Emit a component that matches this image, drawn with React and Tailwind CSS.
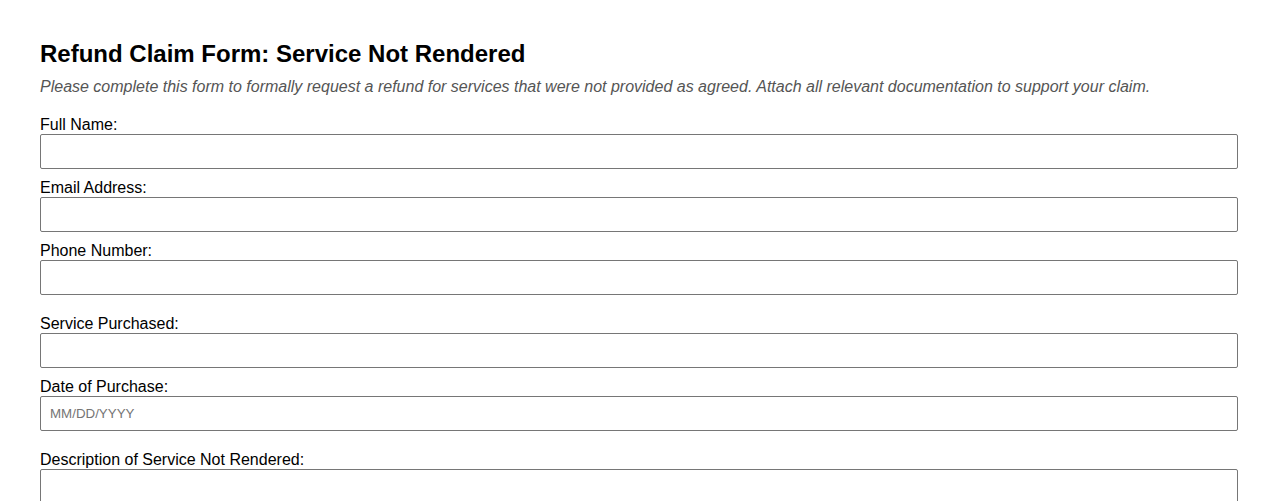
export default function App() {
  const Field = ({ label, placeholder, last }) => (
    <div className={last ? "mb-[20px]" : "mb-[10px]"}>
      <label className="block text-[16px] leading-[18px] text-black">{label}</label>
      <input
        type="text"
        placeholder={placeholder}
        className="block w-full h-[35px] border border-[#767676] rounded-[2px] px-[9px] text-[13.33px] text-black placeholder:text-[#757575] bg-white outline-none"
        style={{ fontFamily: '"Liberation Sans", Arial, sans-serif' }}
      />
    </div>
  );
  return (
    <div className="min-h-screen bg-white p-[40px] pt-[40px]" style={{ fontFamily: '"Liberation Sans", Arial, sans-serif' }}>
      <h2 className="text-[24px] font-bold leading-[28px] text-black m-0 mb-[9px]">
        Refund Claim Form: Service Not Rendered
      </h2>
      <p className="text-[16px] italic text-[#555555] leading-[19px] mb-[20px]">
        Please complete this form to formally request a refund for services that were not provided as agreed. Attach all relevant documentation to support your claim.
      </p>
      <Field label="Full Name:" />
      <Field label="Email Address:" />
      <Field label="Phone Number:" last />
      <Field label="Service Purchased:" />
      <Field label="Date of Purchase:" placeholder="MM/DD/YYYY" last />
      <div className="mb-[10px]">
        <label className="block text-[16px] leading-[18px] text-black">Description of Service Not Rendered:</label>
        <textarea
          className="block w-full h-[120px] border border-[#767676] rounded-[2px] px-[9px] py-[8px] text-[13.33px] bg-white outline-none resize-y"
          style={{ fontFamily: '"Liberation Sans", Arial, sans-serif' }}
        />
      </div>
    </div>
  );
}
